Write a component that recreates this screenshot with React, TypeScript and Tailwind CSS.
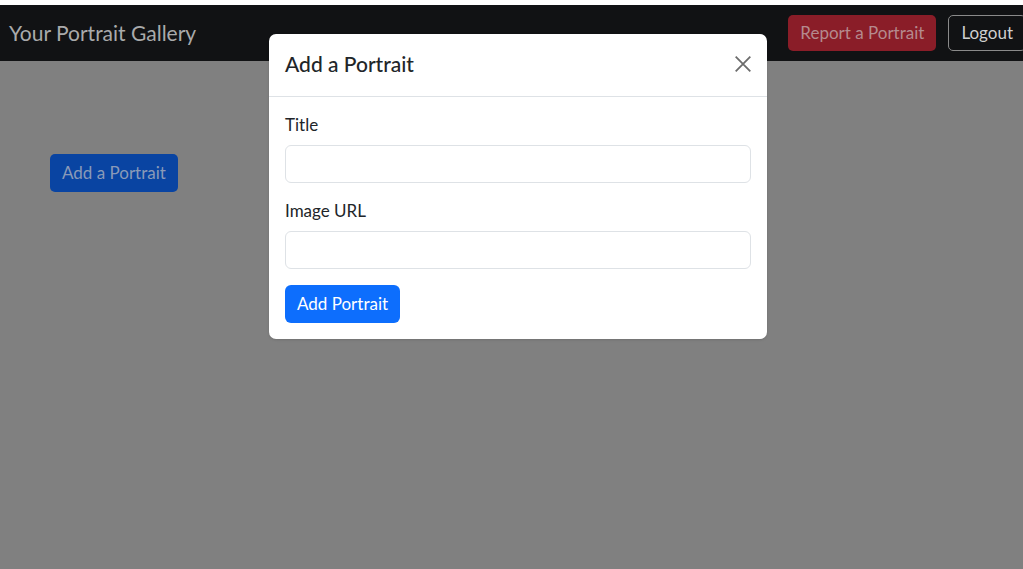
import React from 'react';

const FONT = { fontFamily: 'Lato, "Noto Sans", sans-serif' };

function Navbar() {
  return (
    <div className="flex h-[56px] items-center justify-between bg-[#111214] pl-[9px]">
      <span className="text-[21px] text-[#a9aaab]">Your Portrait Gallery</span>
      <div className="mr-[-3px] flex items-center gap-3">
        <button className="h-[36px] rounded-[5px] bg-[#8a1d28] px-3 text-[17px] text-[#b58a8e]">
          Report a Portrait
        </button>
        <button className="h-[36px] rounded-[5px] border border-[#8a8a8a] px-3 text-[17px] text-[#cfcfcf]">
          Logout
        </button>
      </div>
    </div>
  );
}

function Field({ label }: { label: string }) {
  return (
    <div className="flex flex-col">
      <label className="mb-2 text-[17px] leading-6 text-[#212529]">{label}</label>
      <input className="h-[38px] rounded-[6px] border border-[#dee2e6] bg-white px-3 outline-none" />
    </div>
  );
}

function PortraitModal() {
  return (
    <div className="absolute left-[269px] top-[34px] w-[498px] rounded-[7px] bg-white shadow-sm">
      <div className="flex h-[63px] items-center justify-between border-b border-[#dee2e6] px-4 pb-[3px]">
        <h2 className="text-[21px] font-medium text-[#212529]">Add a Portrait</h2>
        <svg width="18" height="18" viewBox="0 0 16 16" className="mr-[-1px] text-[#6c6c6c]">
          <path d="M1.5 1.5l13 13M14.5 1.5l-13 13" stroke="currentColor" strokeWidth="1.6" />
        </svg>
      </div>
      <div className="flex flex-col gap-[16px] px-4 pb-4 pt-[16px]">
        <Field label="Title" />
        <Field label="Image URL" />
        <div>
          <button className="h-[38px] rounded-[6px] bg-[#0d6efd] px-3 text-[17px] text-white">
            Add Portrait
          </button>
        </div>
      </div>
    </div>
  );
}

export default function App() {
  return (
    <div className="relative h-[569px] w-[1023px] overflow-hidden bg-[#808080]" style={FONT}>
      <div className="h-[5px] bg-white" />
      <Navbar />
      <div className="pl-[50px] pt-[93px]">
        <button className="h-[38px] rounded-[5px] bg-[#0944a2] px-3 text-[17px] text-[#8a9ab8]">
          Add a Portrait
        </button>
      </div>
      <PortraitModal />
    </div>
  );
}
